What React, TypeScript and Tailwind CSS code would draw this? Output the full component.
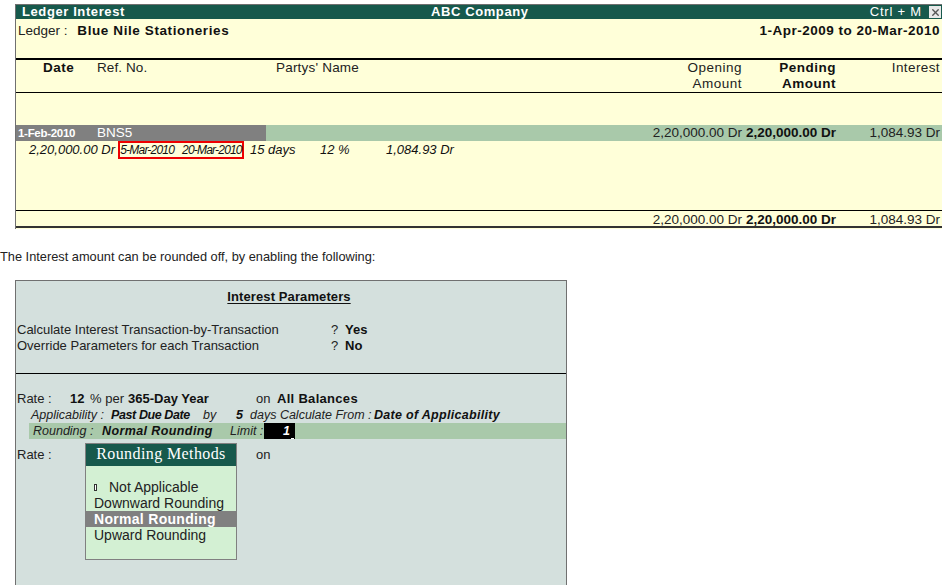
import { X } from "lucide-react";

const sans = "font-['Liberation_Sans',Arial,sans-serif]";

const LedgerPanel = () => (
  <div className="ml-[15px] mt-[4px] w-[927px] h-[225px] flex flex-col border-l border-t border-[#707070] bg-[#ffffd9] text-[13.5px] leading-[16px] text-[#222]">
    {/* Title bar */}
    <div className="h-[14px] shrink-0 flex items-center bg-[#17594c] text-white font-bold text-[13px] tracking-[0.6px] pl-[6px] pr-[1px]">
      <span className="w-[409px]">Ledger Interest</span>
      <span className="flex-1">ABC Company</span>
      <span className="font-normal mr-[7px] tracking-[0.8px]">Ctrl + M</span>
      <span className="w-[12px] h-[12px] bg-[#e8e8e8] flex items-center justify-center">
        <X size={11} strokeWidth={3} className="text-[#555]" />
      </span>
    </div>

    {/* Ledger name and period */}
    <div className="h-[39px] shrink-0 flex justify-between items-start pt-[4px] pl-[2px] pr-[2px]">
      <span>
        Ledger : <b className="ml-[6px] tracking-[0.6px] text-[#111]">Blue Nile Stationeries</b>
      </span>
      <b className="tracking-[0.5px] text-[#111]">1-Apr-2009 to 20-Mar-2010</b>
    </div>

    {/* Column headings */}
    <div className="h-[35px] shrink-0 flex border-t-2 border-b border-black pr-[2px]">
      <b className="w-[81px] pl-[27px] tracking-[0.5px] text-[#111]">Date</b>
      <span className="w-[179px] tracking-[0.1px]">Ref. No.</span>
      <span className="flex-1 tracking-[0.2px]">Partys' Name</span>
      <span className="w-[100px] text-right tracking-[0.5px]">
        Opening
        <br />
        Amount
      </span>
      <b className="w-[94px] text-right tracking-[0.5px] text-[#111]">
        Pending
        <br />
        Amount
      </b>
      <span className="w-[104px] text-right tracking-[0.4px]">Interest</span>
    </div>

    <div className="h-[32px] shrink-0" />

    {/* Selected row */}
    <div className="h-[16px] shrink-0 flex bg-[#a9c9aa] pr-[2px]">
      <div className="w-[250px] flex bg-[#808080] text-white">
        <b className="w-[81px] pl-[2px] text-[11.5px] tracking-[-0.3px]">1-Feb-2010</b>
        <span>BNS5</span>
      </div>
      <span className="flex-1 text-right">2,20,000.00 Dr</span>
      <b className="w-[94px] text-right text-[#111]">2,20,000.00 Dr</b>
      <span className="w-[104px] text-right">1,084.93 Dr</span>
    </div>

    {/* Bill detail row */}
    <div className="h-[69px] shrink-0 flex items-start italic text-[#111] text-[13px]">
      <span className="w-[99px] text-right pt-[1px]">2,20,000.00 Dr</span>
      <span className="ml-[3px] w-[126px] h-[18px] border-2 border-[#ee0000] flex items-center justify-center gap-[8px] text-[12px] tracking-[-0.8px] whitespace-nowrap">
        <span>5-Mar-2010</span>
        <span>20-Mar-2010</span>
      </span>
      <span className="ml-[6px] w-[70px] pt-[1px]">15 days</span>
      <span className="w-[66px] pt-[1px]">12 %</span>
      <span className="pt-[1px]">1,084.93 Dr</span>
    </div>

    {/* Totals */}
    <div className="h-[18px] shrink-0 flex border-t border-b-2 border-t-black border-b-[#333] pr-[2px] pt-[1px]">
      <span className="flex-1 text-right">2,20,000.00 Dr</span>
      <b className="w-[94px] text-right text-[#111]">2,20,000.00 Dr</b>
      <span className="w-[104px] text-right">1,084.93 Dr</span>
    </div>
  </div>
);

const RoundingMethods = () => (
  <div className="absolute left-[69px] top-[162px] w-[152px] h-[117px] border border-[#808080] bg-[#d3f0d3] text-[14px] leading-[16px] text-[#222]">
    <div className="h-[22px] bg-[#17594c] text-white text-center font-['Liberation_Serif',serif] text-[16px] tracking-[0.4px] leading-[20px]">
      Rounding Methods
    </div>
    <div className="pt-[13px]">
      <div className="flex items-center pl-[8px]">
        <span className="w-[3px] h-[7px] border border-[#333] bg-white mr-[12px]" />
        Not Applicable
      </div>
      <div className="pl-[8px]">Downward Rounding</div>
      <div className="pl-[8px] bg-[#808080] text-white font-bold tracking-[0.3px]">Normal Rounding</div>
      <div className="pl-[8px]">Upward Rounding</div>
    </div>
  </div>
);

const ParametersPanel = () => (
  <div className="relative ml-[15px] mt-[15px] w-[552px] h-[320px] border border-[#707070] bg-[#d4e0dd] text-[13px] leading-[16px] text-[#222]">
    <div className="pt-[8px] pr-[4px] text-center">
      <b className="underline underline-offset-2 tracking-[0.1px] text-[#111]">Interest Parameters</b>
    </div>

    <div className="h-[60px] mt-[8px] pt-[9px] pl-[1px]">
      <div className="flex">
        <span className="w-[314px]">Calculate Interest Transaction-by-Transaction</span>
        <span className="w-[14px]">?</span>
        <b className="text-[#111]">Yes</b>
      </div>
      <div className="flex">
        <span className="w-[314px]">Override Parameters for each Transaction</span>
        <span className="w-[14px]">?</span>
        <b className="text-[#111]">No</b>
      </div>
    </div>

    <div className="border-t border-black pt-[17px]">
      <div className="flex pl-[1px]">
        <span className="w-[53px]">Rate :</span>
        <b className="w-[20px] text-[#111]">12</b>
        <span className="w-[38px]">% per</span>
        <b className="w-[128px] text-[#111]">365-Day Year</b>
        <span className="w-[21px]">on</span>
        <b className="tracking-[0.3px] text-[#111]">All Balances</b>
      </div>
      <div className="flex pl-[15px] italic text-[12.5px] whitespace-nowrap">
        <span className="w-[80px]">Applicability :</span>
        <b className="w-[92px] tracking-[-0.4px] text-[#111]">Past Due Date</b>
        <span className="w-[33px]">by</span>
        <b className="w-[14px] text-[#111]">5</b>
        <span className="w-[124px]">days Calculate From :</span>
        <b className="tracking-[0.3px] text-[#111]">Date of Applicability</b>
      </div>
      <div className="ml-[13px] h-[16px] flex bg-[#a9c9aa] pl-[4px] italic text-[12.5px]">
        <span className="w-[69px]">Rounding :</span>
        <b className="w-[128px] tracking-[0.4px] text-[#111]">Normal Rounding</b>
        <span className="w-[34px]">Limit :</span>
        <b className="w-[31px] bg-black text-white flex justify-end items-end pr-[1px]">
          1<span className="w-[3px] h-[1px] bg-white ml-[1px]" />
        </b>
      </div>
      <div className="flex pl-[1px] pt-[8px]">
        <span className="w-[239px]">Rate :</span>
        <span>on</span>
      </div>
    </div>

    <RoundingMethods />
  </div>
);

export default function App() {
  return (
    <div className={`${sans} w-[948px] h-[585px] overflow-hidden bg-white`}>
      <LedgerPanel />
      <p className="mt-[20px] text-[12.8px] leading-[16px] text-[#222]">
        The Interest amount can be rounded off, by enabling the following:
      </p>
      <ParametersPanel />
    </div>
  );
}
